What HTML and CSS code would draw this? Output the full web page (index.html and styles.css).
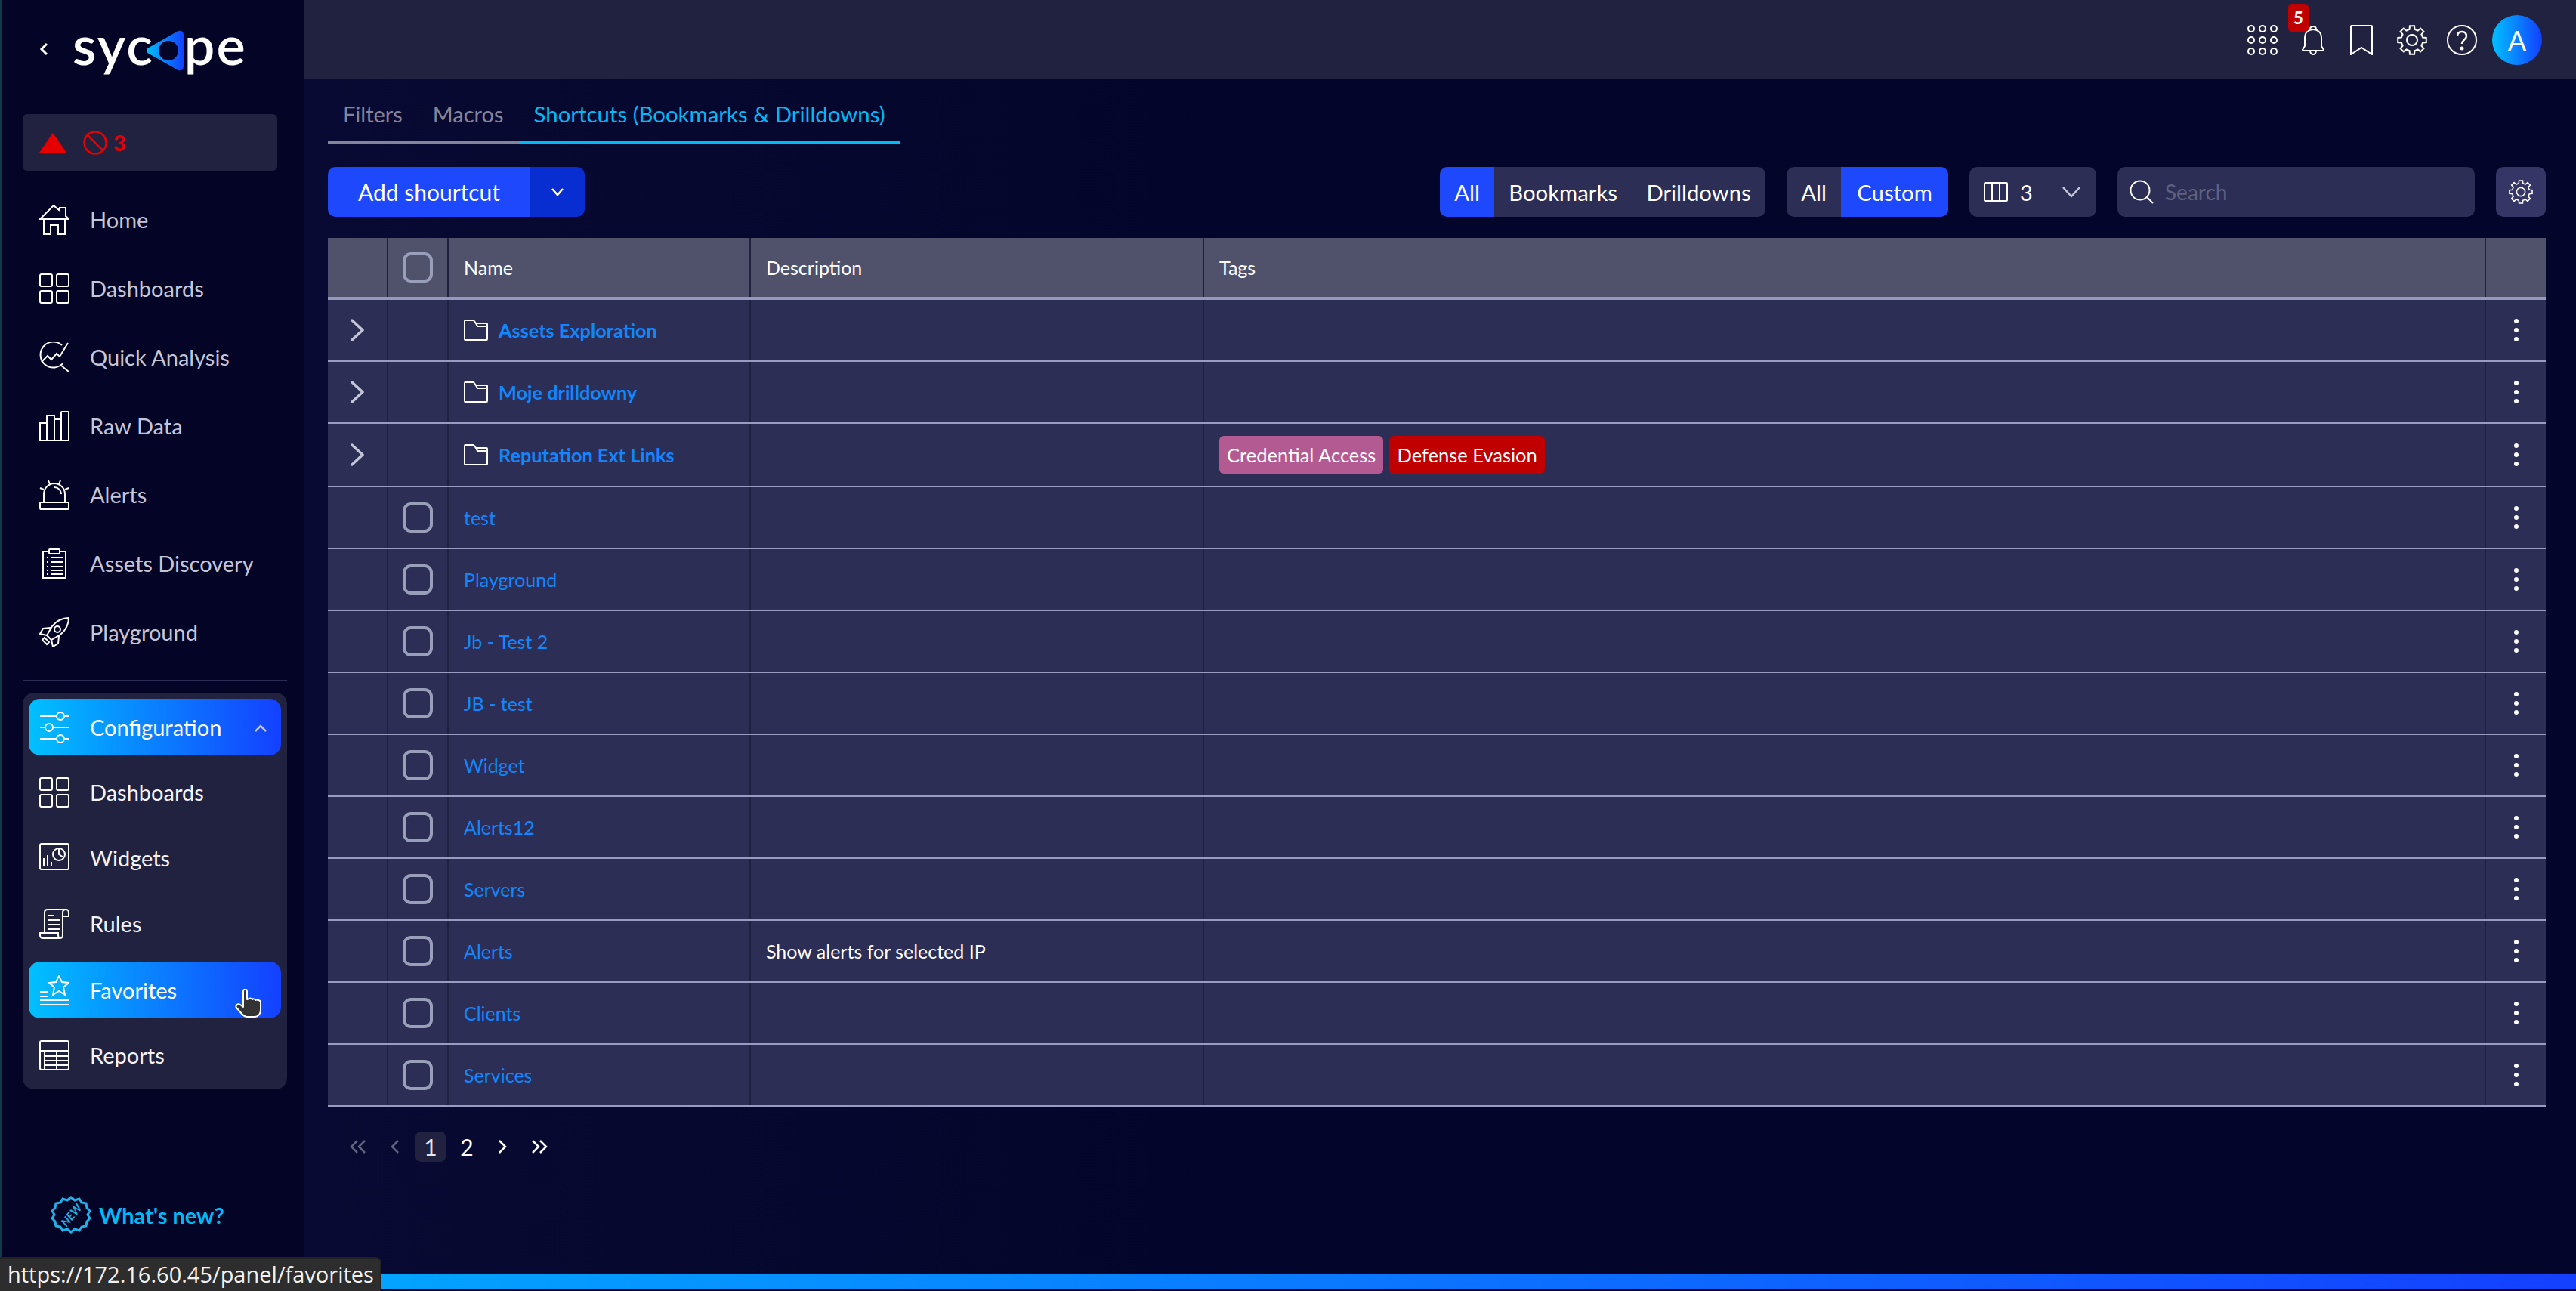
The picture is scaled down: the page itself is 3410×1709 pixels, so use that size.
FILE: index.html
```html
<!DOCTYPE html>
<html lang="en">
<head>
    <meta charset="UTF-8">
    <title>Sycope - Favorites</title>
    <link rel="stylesheet" href="styles.css">
</head>
<body>
    <svg class="defs" width="0" height="0">
        <symbol id="i-dash" viewBox="0 0 40 40"><rect x="1" y="1" width="16" height="16" rx="2"/><rect x="23" y="1" width="16" height="16" rx="2"/><rect x="1" y="23" width="16" height="16" rx="2"/><rect x="23" y="23" width="16" height="16" rx="2"/></symbol>
        <symbol id="i-gear" viewBox="0 0 40 40"><polygon points="16.5,5.9 17,1.2 23,1.2 23.5,5.9 27.5,7.6 31.2,4.6 35.4,8.8 32.4,12.5 34.1,16.5 38.8,17 38.8,23 34.1,23.5 32.4,27.5 35.4,31.2 31.2,35.4 27.5,32.4 23.5,34.1 23,38.8 17,38.8 16.5,34.1 12.5,32.4 8.8,35.4 4.6,31.2 7.6,27.5 5.9,23.5 1.2,23 1.2,17 5.9,16.5 7.6,12.5 4.6,8.8 8.8,4.6 12.5,7.6"/><circle cx="20" cy="20" r="7"/></symbol>
        <symbol id="i-folder" viewBox="0 0 32 28"><path d="M2 1h11l3 4h14a1 1 0 0 1 1 1v20a1 1 0 0 1-1 1H2a1 1 0 0 1-1-1V2a1 1 0 0 1 1-1z"/><path d="M16 5l2 4h13"/></symbol>
        <symbol id="i-right" viewBox="0 0 18 30"><path d="M2 2l14 13L2 28"/></symbol>
        <symbol id="i-kebab" viewBox="0 0 8 32"><circle cx="4" cy="4" r="3"/><circle cx="4" cy="16" r="3"/><circle cx="4" cy="28" r="3"/></symbol>
    </svg>

    <div class="app">
        <div class="app-body">
            <aside class="sidebar">
                <div class="brand">
                    <svg class="back" viewBox="0 0 12 18"><path d="M10 2L3 9l7 7"/></svg>
                    <div class="logo">
                        <span>syc</span>
                        <svg class="logo-mark" viewBox="0 0 50 54">
                            <defs><linearGradient id="logo-grad"><stop offset="0" stop-color="#00c0ff"/><stop offset="1" stop-color="#1440ff"/></linearGradient></defs>
                            <path d="M3 23L41 1.500C45 -0.500 49 1 49 6V48C49 53 45 54.500 41 52.500L3 31C-1 29 -1 25 3 23z" fill="url(#logo-grad)"/>
                            <circle cx="29" cy="27" r="13" fill="#040526"/>
                        </svg>
                        <span>pe</span>
                    </div>
                </div>

                <div class="alert-box">
                    <svg class="alert-tri" viewBox="0 0 36 27"><path d="M18 1L35 26H1z" fill="#e60000" stroke="#e60000" stroke-width="1.500" stroke-linejoin="round"/></svg>
                    <svg class="alert-ban" viewBox="0 0 32 32"><circle cx="16" cy="16" r="14.500"/><path d="M6 6l20 20"/></svg>
                    <span class="alert-count">3</span>
                </div>

                <nav class="nav">
                    <a class="nav-item">
                        <svg class="icon" viewBox="0 0 40 40"><path d="M1 19L19 1l7 6 1-3h8v11l4 4z"/><path d="M6 19v20h9V27h10v12h9V19"/></svg>
                        Home
                    </a>
                    <a class="nav-item">
                        <svg class="icon"><use href="#i-dash"/></svg>
                        Dashboards
                    </a>
                    <a class="nav-item">
                        <svg class="icon" viewBox="0 0 40 40"><path d="M30 4A17 17 0 1 0 32 27"/><path d="M3 26l8-8 5 5 7-8 4 4L38 1"/><path d="M28 30l11 9"/></svg>
                        Quick Analysis
                    </a>
                    <a class="nav-item">
                        <svg class="icon" viewBox="0 0 40 40"><path d="M1 39V16h9v23z"/><path d="M10 39V7q0-1 1-1h8q1 0 1 1v32"/><path d="M20 11h9"/><path d="M29 39V2q0-1 1-1h8q1 0 1 1v37z"/><path d="M1 39h38"/></svg>
                        Raw Data
                    </a>
                    <a class="nav-item">
                        <svg class="icon" viewBox="0 0 40 40"><rect x="1" y="30" width="38" height="9" rx="1"/><path d="M6 30V19a14 14 0 0 1 28 0v11"/><path d="M20 10a9 9 0 0 1 9 9"/><path d="M12 1l2 5M28 1l-2 5M1 11l5 2M39 11l-5 2"/></svg>
                        Alerts
                    </a>
                    <a class="nav-item">
                        <svg class="icon" viewBox="0 0 40 40"><path d="M13 4H5v35h30V4h-8"/><rect x="13" y="1" width="14" height="6" rx="1"/><path d="M10 12h2M15 12h16M10 18h2M15 18h16M10 24h2M15 24h16M10 29h2M15 29h16M10 34h2M15 34h16"/></svg>
                        Assets Discovery
                    </a>
                    <a class="nav-item">
                        <svg class="icon" viewBox="0 0 40 40"><path d="M39 1C30 1 22 6 17 12L10 24l6 6 12-7C34 18 39 10 39 1z"/><circle cx="24" cy="16" r="4"/><path d="M15 14L5 15l-4 7 9 2"/><path d="M26 25l-1 10-7 4-2-9"/><path d="M7 27l6 6-3 3-6-6z"/></svg>
                        Playground
                    </a>
                </nav>

                <div class="nav-divider"></div>

                <div class="nav-panel">
                    <a class="nav-item active">
                        <svg class="icon" viewBox="0 0 40 40"><path d="M1 5h22M33 5h6M1 20h7M18 20h21M1 35h22M33 35h6"/><circle cx="28" cy="5" r="5"/><circle cx="13" cy="20" r="5"/><circle cx="28" cy="35" r="5"/></svg>
                        Configuration
                        <svg class="nav-caret" viewBox="0 0 18 12"><path d="M2 10l7-7 7 7"/></svg>
                    </a>
                    <a class="nav-item light">
                        <svg class="icon"><use href="#i-dash"/></svg>
                        Dashboards
                    </a>
                    <a class="nav-item light">
                        <svg class="icon" viewBox="0 0 40 40"><rect x="1" y="1" width="38" height="34" rx="2"/><circle cx="26" cy="15" r="8"/><path d="M26 7v8l6 4"/><path d="M6 30V20M11 30V16M16 30v-5"/></svg>
                        Widgets
                    </a>
                    <a class="nav-item light">
                        <svg class="icon" viewBox="0 0 40 40"><path d="M7 32V5q0-4 4-4h24"/><path d="M35 1q4 0 4 4v5h-8V5q0-4 4-4"/><path d="M31 10v25q0 4-4 4H5q-4 0-4-4v-3h24v3q0 4 4 4"/><path d="M12 9h8M12 15h15M12 21h15M12 27h15"/></svg>
                        Rules
                    </a>
                    <a class="nav-item active">
                        <svg class="icon" viewBox="0 0 40 40"><path d="M26 1l4 8 9 1-7 6 2 10-8-5-8 5 2-10-7-6 9-1z"/><path d="M1 22h10M1 28h10M1 33h38M1 39h38"/></svg>
                        Favorites
                        <svg class="cursor" viewBox="0 0 36 38"><path d="M11 3c0-3 5-3 5 0v11l3-1c1-1 3 0 4 1 1-1 3-1 4 1 2-1 7 0 7 3v10c0 5-3 9-8 9H16c-3 0-5-2-7-4l-7-8c-2-3 2-6 5-4l4 3z" fill="#333" stroke="#fff" stroke-width="2" stroke-linejoin="round"/></svg>
                    </a>
                    <a class="nav-item light">
                        <svg class="icon" viewBox="0 0 40 40"><rect x="1" y="1" width="38" height="38" rx="2"/><path d="M1 14h38M7 14v25M7 21h32M7 27h32M7 33h32M23 14v25"/></svg>
                        Reports
                    </a>
                </div>

                <a class="whats-new">
                    <svg class="new-badge" viewBox="0 0 52 50">
                        <path d="M26 2l5 4 6-2 3 5 6 1 1 6 4 4-3 5 3 5-4 4-1 6-6 1-3 5-6-2-5 4-5-4-6 2-3-5-6-1-1-6-4-4 3-5-3-5 4-4 1-6 6-1 3-5 6 2z" fill="none" stroke="#22b0e8" stroke-width="3"/>
                        <text x="26" y="31" text-anchor="middle" transform="rotate(-50 26 25)">NEW</text>
                    </svg>
                    What's new?
                </a>
            </aside>

            <div class="content">
                <header class="topbar">
                    <svg class="top-icon" viewBox="0 0 40 40"><circle cx="5" cy="5" r="4"/><circle cx="20" cy="5" r="4"/><circle cx="35" cy="5" r="4"/><circle cx="5" cy="20" r="4"/><circle cx="20" cy="20" r="4"/><circle cx="35" cy="20" r="4"/><circle cx="5" cy="35" r="4"/><circle cx="20" cy="35" r="4"/><circle cx="35" cy="35" r="4"/></svg>
                    <div class="bell">
                        <svg class="bell-icon" viewBox="0 0 32 40"><path d="M2 33l3-5V17C5 10 10 6 16 6s11 4 11 11v11l3 5q0 1-1 1H3q-1 0-1-1z"/><path d="M12 6q0-4 4-4t4 4M12 35q1 4 4 4t4-4"/></svg>
                        <span class="badge">5</span>
                    </div>
                    <svg class="bookmark-icon" viewBox="0 0 30 40"><path d="M2 1h26q1 0 1 1v37l-14-9-14 9V2q0-1 1-1z"/></svg>
                    <svg class="top-icon gear-icon"><use href="#i-gear"/></svg>
                    <svg class="top-icon" viewBox="0 0 40 40"><circle cx="20" cy="20" r="19"/><path d="M14 15q0-6 6-6t6 6c0 4-6 5-6 10" stroke-width="2.500"/><circle cx="20" cy="31" r="1.500" fill="#fff"/></svg>
                    <div class="avatar">A</div>
                </header>

                <main class="main">
                    <div class="tabs">
                        <a class="tab">Filters</a>
                        <a class="tab">Macros</a>
                        <a class="tab current">Shortcuts (Bookmarks &amp; Drilldowns)</a>
                    </div>

                    <div class="toolbar">
                        <div class="split-btn">
                            <button class="split-main">Add shourtcut</button>
                            <button class="split-arrow"><svg viewBox="0 0 18 12"><path d="M2 2l7 8 7-8"/></svg></button>
                        </div>
                        <div class="spacer"></div>
                        <div class="btn-group type-group">
                            <button class="on first">All</button>
                            <button>Bookmarks</button>
                            <button>Drilldowns</button>
                        </div>
                        <div class="btn-group scope-group">
                            <button class="first">All</button>
                            <button class="on">Custom</button>
                        </div>
                        <div class="columns-select">
                            <svg class="cols-icon" viewBox="0 0 32 28"><rect x="1" y="2" width="30" height="24" rx="1"/><path d="M11 2v24M21 2v24"/></svg>
                            <span>3</span>
                            <svg class="cols-caret" viewBox="0 0 26 16"><path d="M2 2l11 12L24 2"/></svg>
                        </div>
                        <div class="search">
                            <svg class="search-icon" viewBox="0 0 32 32"><circle cx="14" cy="14" r="12.500"/><path d="M23 23l8 8"/></svg>
                            <span>Search</span>
                        </div>
                        <button class="gear-btn"><svg><use href="#i-gear"/></svg></button>
                    </div>

                    <div class="table">
                        <div class="row head">
                            <div class="cell"></div>
                            <div class="cell center"><span class="check"></span></div>
                            <div class="cell">Name</div>
                            <div class="cell">Description</div>
                            <div class="cell">Tags</div>
                            <div class="cell"></div>
                        </div>
                        <div class="row">
                            <div class="cell center"><svg class="expand"><use href="#i-right"/></svg></div>
                            <div class="cell"></div>
                            <div class="cell"><svg class="folder"><use href="#i-folder"/></svg><a class="folder-link">Assets Exploration</a></div>
                            <div class="cell"></div>
                            <div class="cell"></div>
                            <div class="cell center"><svg class="kebab"><use href="#i-kebab"/></svg></div>
                        </div>
                        <div class="row">
                            <div class="cell center"><svg class="expand"><use href="#i-right"/></svg></div>
                            <div class="cell"></div>
                            <div class="cell"><svg class="folder"><use href="#i-folder"/></svg><a class="folder-link">Moje drilldowny</a></div>
                            <div class="cell"></div>
                            <div class="cell"></div>
                            <div class="cell center"><svg class="kebab"><use href="#i-kebab"/></svg></div>
                        </div>
                        <div class="row tall">
                            <div class="cell center"><svg class="expand"><use href="#i-right"/></svg></div>
                            <div class="cell"></div>
                            <div class="cell"><svg class="folder"><use href="#i-folder"/></svg><a class="folder-link">Reputation Ext Links</a></div>
                            <div class="cell"></div>
                            <div class="cell tags"><span class="tag pink">Credential Access</span><span class="tag red">Defense Evasion</span></div>
                            <div class="cell center"><svg class="kebab"><use href="#i-kebab"/></svg></div>
                        </div>
                        <div class="row">
                            <div class="cell"></div>
                            <div class="cell center"><span class="check"></span></div>
                            <div class="cell"><a class="link">test</a></div>
                            <div class="cell"></div>
                            <div class="cell"></div>
                            <div class="cell center"><svg class="kebab"><use href="#i-kebab"/></svg></div>
                        </div>
                        <div class="row">
                            <div class="cell"></div>
                            <div class="cell center"><span class="check"></span></div>
                            <div class="cell"><a class="link">Playground</a></div>
                            <div class="cell"></div>
                            <div class="cell"></div>
                            <div class="cell center"><svg class="kebab"><use href="#i-kebab"/></svg></div>
                        </div>
                        <div class="row">
                            <div class="cell"></div>
                            <div class="cell center"><span class="check"></span></div>
                            <div class="cell"><a class="link">Jb - Test 2</a></div>
                            <div class="cell"></div>
                            <div class="cell"></div>
                            <div class="cell center"><svg class="kebab"><use href="#i-kebab"/></svg></div>
                        </div>
                        <div class="row">
                            <div class="cell"></div>
                            <div class="cell center"><span class="check"></span></div>
                            <div class="cell"><a class="link">JB - test</a></div>
                            <div class="cell"></div>
                            <div class="cell"></div>
                            <div class="cell center"><svg class="kebab"><use href="#i-kebab"/></svg></div>
                        </div>
                        <div class="row">
                            <div class="cell"></div>
                            <div class="cell center"><span class="check"></span></div>
                            <div class="cell"><a class="link">Widget</a></div>
                            <div class="cell"></div>
                            <div class="cell"></div>
                            <div class="cell center"><svg class="kebab"><use href="#i-kebab"/></svg></div>
                        </div>
                        <div class="row">
                            <div class="cell"></div>
                            <div class="cell center"><span class="check"></span></div>
                            <div class="cell"><a class="link">Alerts12</a></div>
                            <div class="cell"></div>
                            <div class="cell"></div>
                            <div class="cell center"><svg class="kebab"><use href="#i-kebab"/></svg></div>
                        </div>
                        <div class="row">
                            <div class="cell"></div>
                            <div class="cell center"><span class="check"></span></div>
                            <div class="cell"><a class="link">Servers</a></div>
                            <div class="cell"></div>
                            <div class="cell"></div>
                            <div class="cell center"><svg class="kebab"><use href="#i-kebab"/></svg></div>
                        </div>
                        <div class="row">
                            <div class="cell"></div>
                            <div class="cell center"><span class="check"></span></div>
                            <div class="cell"><a class="link">Alerts</a></div>
                            <div class="cell">Show alerts for selected IP</div>
                            <div class="cell"></div>
                            <div class="cell center"><svg class="kebab"><use href="#i-kebab"/></svg></div>
                        </div>
                        <div class="row">
                            <div class="cell"></div>
                            <div class="cell center"><span class="check"></span></div>
                            <div class="cell"><a class="link">Clients</a></div>
                            <div class="cell"></div>
                            <div class="cell"></div>
                            <div class="cell center"><svg class="kebab"><use href="#i-kebab"/></svg></div>
                        </div>
                        <div class="row">
                            <div class="cell"></div>
                            <div class="cell center"><span class="check"></span></div>
                            <div class="cell"><a class="link">Services</a></div>
                            <div class="cell"></div>
                            <div class="cell"></div>
                            <div class="cell center"><svg class="kebab"><use href="#i-kebab"/></svg></div>
                        </div>
                    </div>

                    <div class="pager">
                        <svg class="pg-arrow wide off" viewBox="0 0 24 20"><path d="M11 2l-8 8 8 8M21 2l-8 8 8 8"/></svg>
                        <svg class="pg-arrow prev off" viewBox="0 0 12 20"><path d="M10 2l-8 8 8 8"/></svg>
                        <span class="pg-num current">1</span>
                        <span class="pg-num">2</span>
                        <svg class="pg-arrow next" viewBox="0 0 12 20"><path d="M2 2l8 8-8 8"/></svg>
                        <svg class="pg-arrow wide last" viewBox="0 0 24 20"><path d="M3 2l8 8-8 8M13 2l8 8-8 8"/></svg>
                    </div>
                </main>
            </div>
        </div>
        <div class="progress"></div>
        <div class="status-url">https://172.16.60.45/panel/favorites</div>
    </div>
</body>
</html>
```

FILE: styles.css
```css
* {
    box-sizing: border-box;
}
html, body {
    margin: 0;
    height: 100%;
    overflow: hidden;
}
body {
    font-family: Lato, "Noto Sans", sans-serif;
    background-color: #04052a;
    color: #fff;
}
button {
    font-family: inherit;
    color: inherit;
    border: none;
    padding: 0;
}
svg {
    fill: none;
    stroke: #fff;
    stroke-width: 2;
    display: block;
    flex: none;
}
.defs {
    position: absolute;
}
.app {
    position: relative;
    display: flex;
    flex-direction: column;
    height: 100vh;
}
.app-body {
    flex: 1;
    display: flex;
    min-height: 0;
}

/* sidebar */
.sidebar {
    width: 402px;
    flex: none;
    display: flex;
    flex-direction: column;
    border-left: 2px solid #0f3a48;
    background-color: #040526;
    padding: 0 22px 0 28px;
}
.brand {
    height: 151px;
    padding: 40px 0 0 22px;
    display: flex;
    align-items: flex-start;
    gap: 32px;
}
.back {
    width: 12px;
    height: 18px;
    margin-top: 16px;
    stroke-width: 3;
}
.logo {
    display: flex;
    align-items: flex-start;
    font-size: 72px;
    line-height: 50px;
    font-weight: 600;
    letter-spacing: 2px;
}
.logo span {
    margin-top: -7px;
}
.logo-mark {
    width: 50px;
    height: 54px;
    stroke: none;
    margin: 0 0 0 -10px;
}
.alert-box {
    width: 337px;
    height: 75px;
    border-radius: 6px;
    background-color: #212240;
    display: flex;
    align-items: center;
    padding: 0 0 0 22px;
}
.alert-tri {
    width: 36px;
    height: 27px;
    stroke: none;
    margin-top: 2px;
}
.alert-ban {
    width: 32px;
    height: 32px;
    stroke: #e60000;
    stroke-width: 2.500;
    margin-left: 22px;
}
.alert-count {
    margin-left: 8px;
    color: #e60000;
    font-size: 28px;
    font-weight: 900;
}
.nav {
    margin-top: 19px;
    display: flex;
    flex-direction: column;
}
.nav-item {
    display: flex;
    align-items: center;
    gap: 27px;
    height: 91px;
    padding-left: 22px;
    font-size: 29px;
    color: #c4c6d8;
}
.icon {
    width: 40px;
    height: 40px;
}
.nav-divider {
    height: 2px;
    width: 350px;
    margin-top: 18px;
    background-color: #2c2b55;
}
.nav-panel {
    width: 350px;
    height: 525px;
    margin-top: 15px;
    padding: 8px;
    border-radius: 15px;
    background-color: #212240;
}
.nav-panel .nav-item {
    height: 87px;
    padding-left: 14px;
    color: #f4f4f8;
}
.nav-panel .nav-item.active {
    height: 75px;
    border-radius: 15px;
    color: #fff;
    background: linear-gradient(90deg, #00c0ff, #1440ff);
    position: relative;
}
.nav-panel .active + .light {
    margin-top: 5px;
}
.nav-panel .light + .active {
    margin-top: 7px;
}
.nav-caret {
    position: absolute;
    right: 18px;
    top: 33px;
    width: 18px;
    height: 12px;
    stroke: #c4c6d8;
    stroke-width: 2.500;
}
.cursor {
    position: absolute;
    left: 273px;
    top: 36px;
    width: 36px;
    height: 38px;
    stroke: none;
}
.whats-new {
    position: absolute;
    left: 68px;
    top: 1583px;
    display: flex;
    align-items: center;
    gap: 11px;
    height: 50px;
    font-size: 29px;
    font-weight: 700;
    color: #00b9f5;
}
.new-badge {
    width: 52px;
    height: 50px;
}
.new-badge text {
    font-size: 15px;
    font-style: italic;
    font-weight: 700;
    fill: #22b0e8;
    stroke: none;
}

/* top bar */
.content {
    flex: 1;
    min-width: 0;
    display: flex;
    flex-direction: column;
}
.topbar {
    height: 105px;
    flex: none;
    display: flex;
    align-items: center;
    justify-content: flex-end;
    padding-right: 45px;
    background-color: #212240;
}
.top-icon {
    width: 40px;
    height: 40px;
    margin-left: 26px;
}
.gear-icon {
    margin-left: 32px;
}
.bell {
    position: relative;
    width: 32px;
    margin-left: 31px;
}
.bell-icon {
    width: 32px;
    height: 40px;
}
.badge {
    position: absolute;
    left: -17px;
    top: -28px;
    width: 27px;
    height: 37px;
    border-radius: 5px;
    background-color: #c00000;
    text-align: center;
    font-size: 22px;
    font-weight: 900;
    line-height: 37px;
}
.bookmark-icon {
    width: 30px;
    height: 40px;
    margin-left: 33px;
}
.avatar {
    width: 66px;
    height: 66px;
    margin-left: 20px;
    border-radius: 50%;
    background: linear-gradient(90deg, #00c0ff, #1440ff);
    text-align: center;
    font-size: 36px;
    line-height: 66px;
}

/* main */
.main {
    flex: 1;
    padding: 0 40px 0 32px;
    background: linear-gradient(90deg, #080a33, #04052a 40%);
}
.tabs {
    width: 758px;
    height: 86px;
    margin-bottom: 30px;
    display: flex;
    border-bottom: 4px solid #83849a;
}
.tab {
    height: 86px;
    padding: 0 20px;
    line-height: 92px;
    font-size: 29px;
    color: #84859b;
    white-space: nowrap;
}
.tab.current {
    font-size: 29.400px;
    color: #00b9f5;
    border-bottom: 4px solid #00b9f5;
}
.toolbar {
    display: flex;
    gap: 28px;
    height: 66px;
    margin-bottom: 28px;
}
.spacer {
    flex: 1;
    margin-right: -28px;
}
.split-btn {
    display: flex;
    width: 340px;
    border-radius: 10px;
    overflow: hidden;
}
.split-main {
    width: 268px;
    font-size: 30px;
    background-color: #1e48fb;
}
.split-arrow {
    flex: 1;
    background-color: #082dd0;
    display: flex;
    align-items: center;
    justify-content: center;
}
.split-arrow svg {
    width: 18px;
    height: 12px;
    stroke-width: 2.500;
}
.btn-group {
    display: flex;
    border-radius: 10px;
    overflow: hidden;
    background-color: #2c2e55;
}
.type-group {
    width: 431px;
}
.scope-group {
    width: 214px;
}
.btn-group button {
    flex: auto;
    font-size: 29.300px;
    background: none;
}
.btn-group .first {
    flex: none;
    width: 72px;
}
.btn-group button.on {
    background-color: #1e48fb;
}
.columns-select {
    width: 168px;
    display: flex;
    align-items: center;
    border-radius: 10px;
    background-color: #2c2e55;
    padding-left: 19px;
    font-size: 29px;
}
.cols-icon {
    width: 32px;
    height: 28px;
    margin-right: 16px;
}
.cols-caret {
    width: 26px;
    height: 16px;
    margin-left: 38px;
    stroke: #c4c6d8;
    stroke-width: 2.500;
}
.search {
    width: 473px;
    display: flex;
    align-items: center;
    gap: 15px;
    padding-left: 16px;
    border-radius: 10px;
    background-color: #2c2e55;
    font-size: 28px;
    color: #5f6180;
}
.search-icon {
    width: 32px;
    height: 32px;
}
.gear-btn {
    width: 66px;
    border-radius: 10px;
    background-color: #353566;
    display: flex;
    align-items: center;
    justify-content: center;
}
.gear-btn svg {
    width: 32px;
    height: 32px;
}

/* table */
.row {
    display: grid;
    grid-template-columns: 80px 80px 400px 600px 1697px 79px;
    height: 82px;
    background-color: #2c2e55;
    border-bottom: 2px solid #9a9bc0;
    font-size: 25px;
}
.row.tall {
    height: 83.500px;
}
.row.head {
    background-color: #50526c;
    border-bottom: 4px solid #9698bd;
}
.cell {
    display: flex;
    align-items: center;
    padding-left: 20px;
    border-right: 2px solid #20213f;
}
.cell:last-child {
    border-right: none;
}
.cell.center {
    justify-content: center;
    padding-left: 0;
}
.check {
    width: 40px;
    height: 40px;
    border: 4px solid #9a9fb9;
    border-radius: 11px;
}
.expand {
    width: 18px;
    height: 30px;
    stroke: #c4c6d8;
    stroke-width: 3.500;
    stroke-linecap: round;
    stroke-linejoin: round;
}
.folder {
    width: 32px;
    height: 28px;
    margin-right: 14px;
}
.folder-link {
    color: #1187ff;
    font-size: 25.300px;
    font-weight: 700;
}
.link {
    color: #1187ff;
}
.tags {
    gap: 7px;
}
.tag {
    height: 50px;
    padding: 0 10px;
    border-radius: 6px;
    font-size: 25.500px;
    line-height: 50px;
}
.tag.pink {
    background-color: #b45a92;
}
.tag.red {
    margin-left: 1px;
    background-color: #c00000;
}
.kebab {
    width: 8px;
    height: 32px;
    fill: #fff;
    stroke: none;
}

/* pager */
.pager {
    margin: 33px 0 0 28px;
    display: flex;
    align-items: center;
    height: 40px;
    font-size: 30px;
}
.pg-arrow {
    width: 12px;
    height: 20px;
    stroke-width: 2.500;
}
.pg-arrow.wide {
    width: 24px;
}
.pg-arrow.off {
    stroke: #62637e;
}
.pg-arrow.prev {
    margin: 0 21px 0 31px;
}
.pg-arrow.next {
    margin: 0 31px 0 21px;
}
.pg-num {
    width: 40px;
    height: 40px;
    line-height: 40px;
    text-align: center;
    border-radius: 7px;
}
.pg-num.current {
    background-color: #212240;
    color: #e8e8f0;
}
.pg-num + .pg-num {
    margin-left: 8px;
}

/* bottom strip */
.progress {
    height: 22px;
    flex: none;
    border-bottom: 2px solid #04052a;
    background: linear-gradient(90deg, #00b4ff, #1440ff);
}
.status-url {
    position: absolute;
    left: 0;
    bottom: 0;
    width: 505px;
    height: 45px;
    padding-left: 10px;
    border-radius: 0 8px 0 0;
    border: 2px solid #222;
    border-width: 2px 2px 0 0;
    background-color: #2d2d2d;
    font-family: "Open Sans", sans-serif;
    font-size: 29px;
    line-height: 41px;
    color: #f2f2f2;
    white-space: nowrap;
}
```
